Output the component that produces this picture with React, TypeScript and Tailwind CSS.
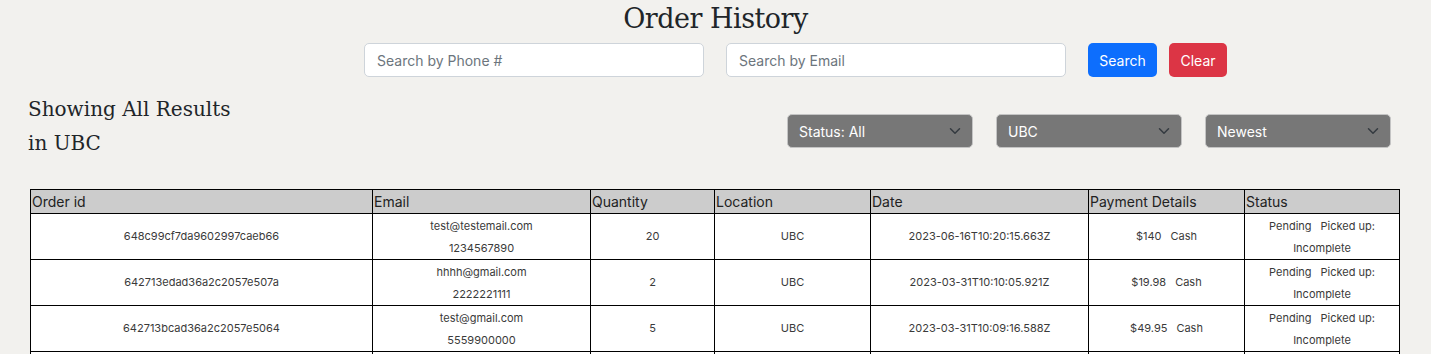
import React from 'react';

const orders = [
  { id: '648c99cf7da9602997caeb66', email: 'test@testemail.com', phone: '1234567890', qty: 20, location: 'UBC', date: '2023-06-16T10:20:15.663Z', price: '$140' },
  { id: '642713edad36a2c2057e507a', email: 'hhhh@gmail.com', phone: '2222221111', qty: 2, location: 'UBC', date: '2023-03-31T10:10:05.921Z', price: '$19.98' },
  { id: '642713bcad36a2c2057e5064', email: 'test@gmail.com', phone: '5559900000', qty: 5, location: 'UBC', date: '2023-03-31T10:09:16.588Z', price: '$49.95' },
  { id: '642713bcad36a2c2057e5063', email: 'test@gmail.com', phone: '5559900000', qty: 5, location: 'UBC', date: '2023-03-31T10:09:16.588Z', price: '$49.95' },
];

const serif = { fontFamily: '"DejaVu Serif", "Liberation Serif", serif' };

function Chevron() {
  return (
    <svg width="12" height="12" viewBox="0 0 16 16" fill="none" stroke="#343a40" strokeWidth="2" strokeLinecap="round" strokeLinejoin="round">
      <path d="M2 5l6 6 6-6" />
    </svg>
  );
}

function Dropdown({ label }: { label: string }) {
  return (
    <div className="w-[186px] h-[34px] bg-[#777777] border border-[#c4c4c4] rounded-[5px] flex items-center justify-between pl-[11px] pr-[11px] text-white text-[14px]">
      <span>{label}</span>
      <Chevron />
    </div>
  );
}

export default function App() {
  return (
    <div className="min-h-[354px] bg-[#f2f1ee] text-[#212529] font-['Inter',sans-serif]">
      <h1 className="text-center text-[27px] leading-[36px] pt-[1px] tracking-[-0.5px]" style={serif}>Order History</h1>

      <div className="flex items-center mt-[6px] pl-[364px]">
        <input
          placeholder="Search by Phone #"
          className="w-[340px] h-[34px] bg-white border border-[#ced4da] rounded-[5px] px-[12px] text-[14px] placeholder:text-[#6c757d] outline-none"
        />
        <input
          placeholder="Search by Email"
          className="w-[340px] h-[34px] ml-[22px] bg-white border border-[#ced4da] rounded-[5px] px-[12px] text-[14px] placeholder:text-[#6c757d] outline-none"
        />
        <button className="ml-[22px] w-[69px] h-[34px] bg-[#0d6efd] text-white text-[14px] rounded-[5px]">Search</button>
        <button className="ml-[12px] w-[58px] h-[34px] bg-[#dc3545] text-white text-[14px] rounded-[5px]">Clear</button>
      </div>

      <div className="flex justify-between items-start pl-[28px] pr-[40px] mt-[15px]">
        <div className="text-[20px] leading-[34px]" style={serif}>
          <div>Showing All Results</div>
          <div>in UBC</div>
        </div>
        <div className="flex gap-[23px] mt-[22px]">
          <Dropdown label="Status: All" />
          <Dropdown label="UBC" />
          <Dropdown label="Newest" />
        </div>
      </div>

      <table className="ml-[30px] mt-[29px] w-[1370px] border-collapse text-[#222]">
        <thead>
          <tr className="bg-[#cccccc] text-[14px] text-left">
            <th className="font-normal border border-black h-[24px] px-[1px] w-[342px]">Order id</th>
            <th className="font-normal border border-black px-[1px] w-[218px]">Email</th>
            <th className="font-normal border border-black px-[1px] w-[124px]">Quantity</th>
            <th className="font-normal border border-black px-[1px] w-[156px]">Location</th>
            <th className="font-normal border border-black px-[1px] w-[218px]">Date</th>
            <th className="font-normal border border-black px-[1px] w-[156px]">Payment Details</th>
            <th className="font-normal border border-black px-[1px]">Status</th>
          </tr>
        </thead>
        <tbody className="bg-white text-[11px] text-center text-[#3a3a3a]">
          {orders.map((o) => (
            <tr key={o.id} className="h-[46px]">
              <td className="border border-black">{o.id}</td>
              <td className="border border-black leading-[22px]">
                <div>{o.email}</div>
                <div>{o.phone}</div>
              </td>
              <td className="border border-black">{o.qty}</td>
              <td className="border border-black">{o.location}</td>
              <td className="border border-black">{o.date}</td>
              <td className="border border-black">
                {o.price}
                <span className="ml-[9px]">Cash</span>
              </td>
              <td className="border border-black leading-[22px]">
                <div>
                  Pending<span className="ml-[9px]">Picked up:</span>
                </div>
                <div>Incomplete</div>
              </td>
            </tr>
          ))}
        </tbody>
      </table>
    </div>
  );
}
